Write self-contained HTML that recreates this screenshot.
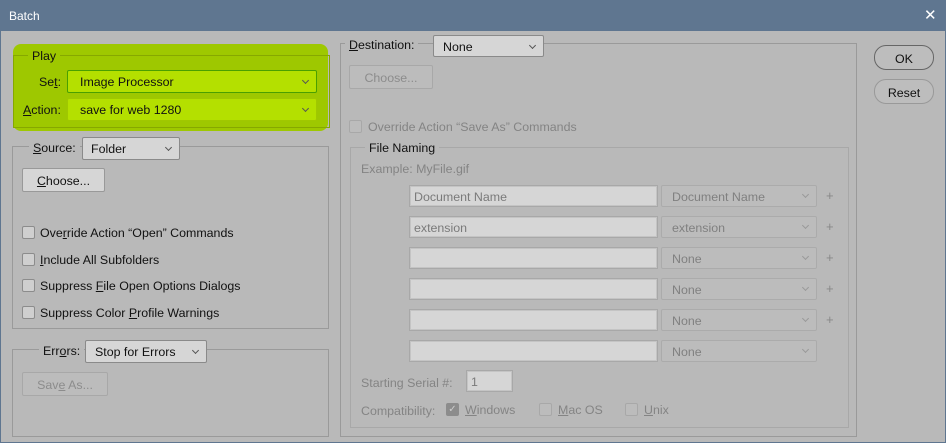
<!DOCTYPE html><html><head><style>
*{box-sizing:border-box;margin:0;padding:0}
body{width:946px;height:443px;background:#b9b9b9;font-family:"Liberation Sans",sans-serif;font-size:12.4px;color:#111;position:relative;overflow:hidden}
.a{position:absolute}
.title{left:0;top:0;width:946px;height:31px;background:#5f7690;color:#fff;font-size:12px;padding:9px 0 0 9px}
.grp{position:absolute;border:1px solid #9a9a9a}
.lg{position:absolute;background:#b9b9b9;padding:0 4px;white-space:nowrap}
.dd{position:absolute;border:1px solid #8a8a8a;background:#d6d6d6;border-radius:2px;padding:4px 0 0 12px;white-space:nowrap}
.dd:after{content:"";position:absolute;right:8px;top:7px;width:4px;height:4px;border-right:1px solid #555;border-bottom:1px solid #555;transform:rotate(45deg)}
.btn{position:absolute;border:1px solid #999;background:#d6d6d6;border-radius:2px;text-align:center;padding-top:5px}
.dis{color:#8c8c8c;background:#bcbcbc;border-color:#a8a8a8}
.cb{position:absolute;width:13px;height:13px;border:1px solid #8c8c8c;background:#cfcfcf;border-radius:2px}
.t{position:absolute;white-space:nowrap}
.g{color:#848484}
.tf{position:absolute;width:249px;height:22px;border:1px solid #a8a8a8;background:#d6d6d6;color:#7a7a7a;padding:4px 0 0 4px;box-shadow:inset 0 0 0 1px #c4c4c4}
.gd{position:absolute;width:156px;height:22px;border:1px solid #ababab;background:#bcbcbc;color:#808080;border-radius:2px;padding:4px 0 0 10px}
.gd:after{content:"";position:absolute;right:8px;top:6px;width:4px;height:4px;border-right:1px solid #999;border-bottom:1px solid #999;transform:rotate(45deg)}
.pl{position:absolute;left:826px;color:#888;font-size:13px}
.rb{position:absolute;border:1px solid #666;border-radius:12px;text-align:center;padding-top:6px;background:#bdbdbd}
u{text-decoration:underline}
.frame{left:0;top:0;width:946px;height:443px;border:1px solid #5f7690;pointer-events:none}
</style></head><body>
<div class="a title">Batch</div>
<div class="a" style="left:924px;top:6px;color:#fff;font-size:15px">✕</div>

<div class="a" style="left:13px;top:44px;width:315px;height:87px;background:#9ec800;border-radius:8px"></div>
<div class="grp" style="left:13px;top:55px;width:317px;height:73px;border-color:#86a800"></div>
<div class="lg" style="left:28px;top:49px;background:#9ec800">Play</div>
<div class="t" style="left:39px;top:75px">Se<u>t</u>:</div>
<div class="dd" style="left:67px;top:70px;width:250px;height:23px;background:#b4e000;border-color:#4aa000">Image Processor</div>
<div class="t" style="left:23px;top:103px"><u>A</u>ction:</div>
<div class="dd" style="left:67px;top:98px;width:250px;height:23px;background:#b4e000;border-color:#a0c800">save for web 1280</div>

<div class="grp" style="left:12px;top:146px;width:317px;height:183px"></div>
<div class="lg" style="left:29px;top:141px"><u>S</u>ource:</div>
<div class="dd" style="left:82px;top:137px;width:98px;height:23px;padding-left:8px">Folder</div>
<div class="btn" style="left:22px;top:168px;width:83px;height:24px"><u>C</u>hoose...</div>
<div class="cb" style="left:22px;top:226px"></div><div class="t" style="left:40px;top:226px">Ove<u>r</u>ride Action “Open” Commands</div>
<div class="cb" style="left:22px;top:253px"></div><div class="t" style="left:40px;top:253px"><u>I</u>nclude All Subfolders</div>
<div class="cb" style="left:22px;top:279px"></div><div class="t" style="left:40px;top:279px">Suppress <u>F</u>ile Open Options Dialogs</div>
<div class="cb" style="left:22px;top:306px"></div><div class="t" style="left:40px;top:306px">Suppress Color <u>P</u>rofile Warnings</div>

<div class="grp" style="left:12px;top:349px;width:317px;height:88px"></div>
<div class="lg" style="left:39px;top:344px">Err<u>o</u>rs:</div>
<div class="dd" style="left:85px;top:340px;width:122px;height:23px;padding-left:9px">Stop for Errors</div>
<div class="btn dis" style="left:22px;top:372px;width:86px;height:24px">Sav<u>e</u> As...</div>

<div class="grp" style="left:340px;top:43px;width:517px;height:394px"></div>
<div class="lg" style="left:345px;top:38px"><u>D</u>estination:</div>
<div class="dd" style="left:433px;top:35px;width:111px;height:22px;padding-left:9px">None</div>
<div class="btn dis" style="left:349px;top:65px;width:84px;height:24px">Choose...</div>
<div class="cb" style="left:349px;top:120px;border-color:#a8a8a8;background:#bcbcbc"></div><div class="t g" style="left:368px;top:120px">Override Action “Save As” Commands</div>

<div class="grp" style="left:350px;top:147px;width:499px;height:281px;border-color:#a8a8a8"></div>
<div class="lg" style="left:365px;top:141px">File Naming</div>
<div class="t g" style="left:361px;top:162px">Example: MyFile.gif</div>
<div class="tf" style="left:409px;top:185px">Document Name</div><div class="gd" style="left:661px;top:185px">Document Name</div><div class="pl" style="top:188px">+</div>
<div class="tf" style="left:409px;top:216px">extension</div><div class="gd" style="left:661px;top:216px">extension</div><div class="pl" style="top:219px">+</div>
<div class="tf" style="left:409px;top:247px"></div><div class="gd" style="left:661px;top:247px">None</div><div class="pl" style="top:250px">+</div>
<div class="tf" style="left:409px;top:278px"></div><div class="gd" style="left:661px;top:278px">None</div><div class="pl" style="top:281px">+</div>
<div class="tf" style="left:409px;top:309px"></div><div class="gd" style="left:661px;top:309px">None</div><div class="pl" style="top:312px">+</div>
<div class="tf" style="left:409px;top:340px"></div><div class="gd" style="left:661px;top:340px">None</div>
<div class="t g" style="left:361px;top:376px">Starting Serial #:</div>
<div class="tf" style="left:466px;top:370px;width:47px;height:22px">1</div>
<div class="t g" style="left:361px;top:404px">Compatibility:</div>
<div class="cb" style="left:446px;top:403px;background:#8c8c8c;border-color:#8c8c8c;color:#ccc;font-size:10px;line-height:11px;text-align:center">✓</div><div class="t g" style="left:465px;top:403px"><u>W</u>indows</div>
<div class="cb" style="left:539px;top:403px;border-color:#a8a8a8;background:#bcbcbc"></div><div class="t g" style="left:558px;top:403px"><u>M</u>ac OS</div>
<div class="cb" style="left:625px;top:403px;border-color:#a8a8a8;background:#bcbcbc"></div><div class="t g" style="left:644px;top:403px"><u>U</u>nix</div>

<div class="rb" style="left:874px;top:45px;width:60px;height:25px">OK</div>
<div class="rb" style="left:874px;top:79px;width:60px;height:25px;border-color:#999">Reset</div>
<div class="a frame"></div>
</body></html>
